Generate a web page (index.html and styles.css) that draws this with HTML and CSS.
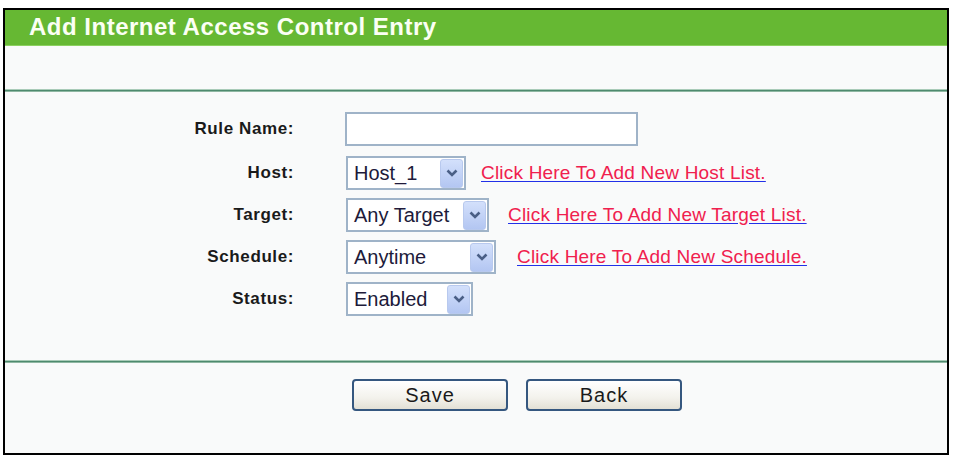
FILE: index.html
```html
<!DOCTYPE html>
<html>
<head>
<meta charset="utf-8">
<title>Add Internet Access Control Entry</title>
<link rel="stylesheet" href="styles.css">
</head>
<body>
<div class="panel">
  <div class="head">Add Internet Access Control Entry</div>
  <div class="band"></div>
  <div class="rule"></div>
  <div class="form">
    <div class="row row-first">
      <div class="label">Rule Name:</div>
      <div class="field"><div class="textbox"></div></div>
    </div>
    <div class="row">
      <div class="label">Host:</div>
      <div class="field">
        <div class="select w-host"><span class="val">Host_1</span><span class="drop"><svg width="12" height="8" viewBox="0 0 12 8"><polyline points="1.5,1.5 6,6 10.5,1.5" fill="none" stroke="#4a5f86" stroke-width="2.6"/></svg></span></div>
        <a class="link g-host" href="#">Click Here To Add New Host List.</a>
      </div>
    </div>
    <div class="row">
      <div class="label">Target:</div>
      <div class="field">
        <div class="select w-target"><span class="val">Any Target</span><span class="drop"><svg width="12" height="8" viewBox="0 0 12 8"><polyline points="1.5,1.5 6,6 10.5,1.5" fill="none" stroke="#4a5f86" stroke-width="2.6"/></svg></span></div>
        <a class="link g-target" href="#">Click Here To Add New Target List.</a>
      </div>
    </div>
    <div class="row">
      <div class="label">Schedule:</div>
      <div class="field">
        <div class="select w-sched"><span class="val">Anytime</span><span class="drop"><svg width="12" height="8" viewBox="0 0 12 8"><polyline points="1.5,1.5 6,6 10.5,1.5" fill="none" stroke="#4a5f86" stroke-width="2.6"/></svg></span></div>
        <a class="link g-sched" href="#">Click Here To Add New Schedule.</a>
      </div>
    </div>
    <div class="row">
      <div class="label">Status:</div>
      <div class="field">
        <div class="select w-status"><span class="val">Enabled</span><span class="drop"><svg width="12" height="8" viewBox="0 0 12 8"><polyline points="1.5,1.5 6,6 10.5,1.5" fill="none" stroke="#4a5f86" stroke-width="2.6"/></svg></span></div>
      </div>
    </div>
  </div>
  <div class="rule"></div>
  <div class="actions">
    <button class="btn">Save</button>
    <button class="btn">Back</button>
  </div>
</div>
</body>
</html>
```
FILE: styles.css
```css
html, body {
  margin: 0;
  padding: 0;
  background: #ffffff;
}
body {
  font-family: "Liberation Sans", Arial, sans-serif;
}
.panel {
  margin: 8px 0 0 3px;
  width: 946px;
  height: 447px;
  box-sizing: border-box;
  border: 2px solid #000;
  background: #f9fafa;
  display: flex;
  flex-direction: column;
}
.head {
  height: 36px;
  background: #66b833;
  color: #fbfff4;
  font-weight: bold;
  font-size: 24px;
  letter-spacing: 0.5px;
  line-height: 34px;
  padding-left: 24px;
  box-sizing: border-box;
  border-bottom: 1px solid #8cd060;
}
.band {
  height: 43px;
}
.rule {
  height: 3px;
  background: linear-gradient(#a9cbb8 0 1px, #4e8a6e 1px 2px, #8fb7a2 2px 3px);
}
.form {
  padding: 20px 0 0 0;
  height: 268px;
  box-sizing: border-box;
  display: flex;
  flex-direction: column;
  gap: 8px;
}
.row {
  display: grid;
  grid-template-columns: 288px 1fr;
  column-gap: 52px;
  align-items: center;
  height: 34px;
}
.row-first {
  margin-bottom: 2px;
}
.label {
  text-align: right;
  font-weight: bold;
  font-size: 17px;
  letter-spacing: 0.6px;
  color: #1a1a1a;
  margin-right: -1px;
}
.field {
  display: flex;
  align-items: center;
}
.textbox {
  width: 293px;
  height: 34px;
  box-sizing: border-box;
  border: 2px solid #9fb3c8;
  background: #fff;
}
.select {
  height: 34px;
  box-sizing: border-box;
  border: 2px solid #9fb3c8;
  background: #fff;
  display: flex;
  align-items: center;
  justify-content: space-between;
  padding: 0 1px 0 6px;
  margin-left: 1px;
}
.w-host { width: 120px; }
.w-target { width: 143px; }
.w-sched { width: 150px; }
.w-status { width: 127px; }
.val {
  font-size: 20px;
  color: #201a3a;
  white-space: nowrap;
}
.drop {
  width: 23px;
  height: 29px;
  box-sizing: border-box;
  border-radius: 3px;
  border: 1px solid #b8c9ee;
  background: linear-gradient(#d3e0fb, #b3c6f2);
  display: flex;
  align-items: center;
  justify-content: center;
}
.link {
  font-size: 19px;
  letter-spacing: 0.2px;
  color: #f0204e;
  text-decoration: underline;
  text-decoration-color: #2230e8;
  text-underline-offset: 2px;
  white-space: nowrap;
}
.g-host { margin-left: 15px; }
.g-target { margin-left: 19px; }
.g-sched { margin-left: 21px; }
.actions {
  padding: 16px 0 0 347px;
  display: flex;
  gap: 18px;
}
.btn {
  width: 156px;
  height: 32px;
  box-sizing: border-box;
  border: 2px solid #35577f;
  border-radius: 4px;
  background: linear-gradient(#ffffff, #f3f2ec 60%, #e3e0d5);
  font-family: "Liberation Sans", Arial, sans-serif;
  font-size: 20px;
  letter-spacing: 1px;
  color: #1a1a1a;
  padding: 0;
}
```
